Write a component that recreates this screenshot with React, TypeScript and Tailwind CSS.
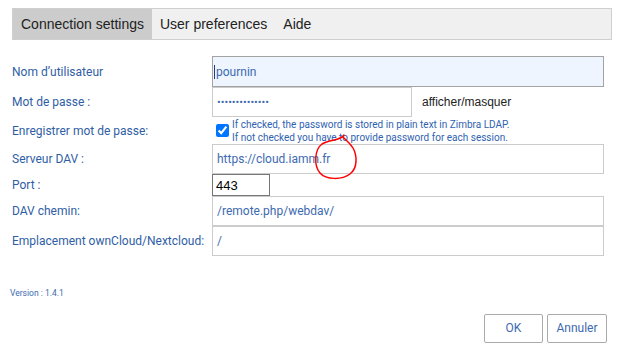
import React from "react";

const labelCls = "flex items-center text-[12px] text-[#2f5ea5]";
const fieldCls =
  "w-full h-full border border-[#cccccc] bg-white px-[4px] text-[12px] text-[#3d6ab0] outline-none font-['Roboto',sans-serif]";

function Row({ label, h, children }: { label: string; h: string; children: React.ReactNode }) {
  return (
    <div className={`flex ${h}`}>
      <div className={`${labelCls} w-[200px] shrink-0`}>{label}</div>
      <div className="flex-1 flex items-stretch">{children}</div>
    </div>
  );
}

export default function App() {
  return (
    <div className="relative w-[625px] h-[357px] bg-white overflow-hidden font-['Roboto',sans-serif]">
      {/* Tabs */}
      <div className="px-3 pt-2">
        <div className="flex h-[32px] w-[600px] border border-[#cfcfcf] bg-[#f0f0f0] text-[14px] text-[#222] font-['Liberation_Sans',Arial,sans-serif]">
          <div className="flex items-center pl-[8px] pr-[8px] bg-[#cccccc]">Connection settings</div>
          <div className="flex items-center px-[8px]">User preferences</div>
          <div className="flex items-center px-[8px]">Aide</div>
        </div>
      </div>

      {/* Form */}
      <div className="mt-4 ml-3 w-[592px] flex flex-col">
        <Row label="Nom d’utilisateur" h="h-[31px]">
          <div className="w-full h-[31px] border border-[#a3a3a3] bg-[#eef5fe] pl-[1px] flex items-center text-[12px] text-[#3d6ab0]">
            <span className="w-px h-[14px] bg-[#1f3f80] mr-[1px]" />
            pournin
          </div>
        </Row>
        <Row label="Mot de passe :" h="h-[30px]">
          <input
            type="password"
            readOnly
            value="xxxxxxxxxxxxxx"
            className="w-[200px] h-[30px] border border-[#cccccc] bg-white px-[4px] text-[11px] text-[#3d6ab0] outline-none"
          />
          <span className="flex items-center pl-[10px] text-[12px] text-[#222] font-['Liberation_Sans',Arial,sans-serif]">
            afficher/masquer
          </span>
        </Row>
        <Row label="Enregistrer mot de passe:" h="h-[27px]">
          <div className="flex items-start pt-[1px]">
            <input
              type="checkbox"
              defaultChecked
              className="mt-[6px] ml-[4px] mr-[3px] w-[13px] h-[13px] accent-[#0075ff]"
            />
            <div className="text-[10px] leading-[13px] text-[#2f62b0]">
              <div>If checked, the password is stored in plain text in Zimbra LDAP.</div>
              <div>If not checked you have to provide password for each session.</div>
            </div>
          </div>
        </Row>
        <Row label="Serveur DAV :" h="h-[30px]">
          <input readOnly value="https://cloud.iamm.fr" className={fieldCls} />
        </Row>
        <Row label="Port :" h="h-[22px]">
          <input
            readOnly
            value="443"
            className="w-[58px] h-[22px] border border-[#767676] bg-white px-[3px] text-[13px] text-black outline-none font-['Liberation_Sans',Arial,sans-serif]"
          />
        </Row>
        <Row label="DAV chemin:" h="h-[30px]">
          <input readOnly value="/remote.php/webdav/" className={fieldCls} />
        </Row>
        <Row label="Emplacement ownCloud/Nextcloud:" h="h-[30px]">
          <input readOnly value="/" className={fieldCls} />
        </Row>
      </div>

      {/* Version */}
      <div className="mt-[31px] ml-[10px] text-[8.5px] text-[#3d6ab0]">Version : 1.4.1</div>

      {/* Buttons */}
      <div className="mt-[14px] pr-[18px] flex justify-end gap-[4px]">
        <button className="w-[59px] h-[29px] border border-[#aaaaaa] rounded-[2px] bg-white text-[12px] text-[#3d6ab0]">
          OK
        </button>
        <button className="w-[60px] h-[29px] border border-[#aaaaaa] rounded-[2px] bg-white text-[12px] text-[#3d6ab0]">
          Annuler
        </button>
      </div>

      {/* Red hand-drawn annotation */}
      <svg className="absolute left-0 top-0 pointer-events-none" width="625" height="357">
        <path
          d="M344 135 C340 141 330 139 322 144 C314 150 314 166 320 173 C326 180 342 180 350 174 C358 168 357 155 353 148 C350 143 346 140 343 137"
          fill="none"
          stroke="#ff0000"
          strokeWidth="1.5"
          strokeLinecap="round"
        />
      </svg>
    </div>
  );
}
